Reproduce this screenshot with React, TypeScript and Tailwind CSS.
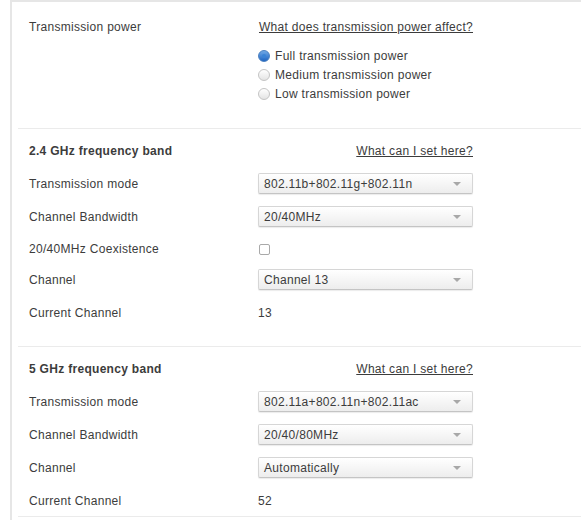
import React from "react"

const font = { fontFamily: '"Liberation Sans", Arial, sans-serif', letterSpacing: "0.3px" }

function Select({ value }: { value: string }) {
  return (
    <div className="relative flex h-[21px] w-[215px] items-center rounded-[2px] border border-[#d6d6d6] border-b-[#c4c4c4] bg-gradient-to-b from-white to-[#ededed] pl-[5px] shadow-[0_1px_1px_rgba(0,0,0,0.08)]">
      <span>{value}</span>
      <span className="absolute right-[11px] top-[8px] h-0 w-0 border-x-[4px] border-t-[4px] border-x-transparent border-t-[#a8a8a8]" />
    </div>
  )
}

function Radio({ checked, label }: { checked?: boolean; label: string }) {
  return (
    <div className="flex h-[19px] items-center">
      {checked ? (
        <span className="flex h-[12px] w-[12px] items-center justify-center rounded-full border border-[#4a7fc0] bg-gradient-to-b from-[#6fa8e6] to-[#1f66c2]">
          <span className="h-[4px] w-[4px] rounded-full bg-[#3a84d6]" />
        </span>
      ) : (
        <span className="h-[12px] w-[12px] rounded-full border border-[#c4c4c4] bg-gradient-to-b from-white to-[#e4e4e4]" />
      )}
      <span className="ml-[5px]">{label}</span>
    </div>
  )
}

function Row({ label, children, h = "h-[21px]" }: { label: string; children: React.ReactNode; h?: string }) {
  return (
    <div className={`flex items-center ${h}`}>
      <div className="w-[229px]">{label}</div>
      <div className="w-[215px]">{children}</div>
    </div>
  )
}

function Band({
  title,
  rows,
  className,
}: {
  title: string
  rows: React.ReactNode
  className: string
}) {
  return (
    <section className={`border-b border-[#ebebeb] pl-[11px] pt-[11px] ${className}`}>
      <div className="flex flex-col gap-[12px]">
        <div className="flex h-[21px] items-center">
          <div className="w-[229px] font-bold">{title}</div>
          <div className="w-[215px] text-right">
            <a className="underline">What can I set here?</a>
          </div>
        </div>
        {rows}
      </div>
    </section>
  )
}

export default function App() {
  return (
    <div className="h-[520px] w-[581px] overflow-hidden bg-white text-[12px] text-[#3c3c3c]" style={font}>
      <div className="ml-[10px] h-full border-l-2 border-t-2 border-[#e6e6e6] pl-[6px]">
        <section className="border-b border-[#ebebeb] pb-[25px] pl-[11px] pt-[14px]">
          <div className="flex">
            <div className="flex h-[21px] w-[229px] items-center">Transmission power</div>
            <div className="w-[215px]">
              <div className="flex h-[21px] items-center justify-end">
                <a className="underline">What does transmission power affect?</a>
              </div>
              <div className="mt-[9px] flex flex-col">
                <Radio checked label="Full transmission power" />
                <Radio label="Medium transmission power" />
                <Radio label="Low transmission power" />
              </div>
            </div>
          </div>
        </section>

        <Band
          title="2.4 GHz frequency band"
          className="pb-[23px]"
          rows={
            <>
              <Row label="Transmission mode">
                <Select value="802.11b+802.11g+802.11n" />
              </Row>
              <Row label="Channel Bandwidth">
                <Select value="20/40MHz" />
              </Row>
              <Row label="20/40MHz Coexistence" h="h-[18px] pt-[2px]">
                <span className="ml-[1px] block h-[11px] w-[11px] rounded-[2px] border border-[#a9a9a9] bg-white" />
              </Row>
              <Row label="Channel">
                <Select value="Channel 13" />
              </Row>
              <Row label="Current Channel">13</Row>
            </>
          }
        />

        <Band
          title="5 GHz frequency band"
          className="pb-[5px]"
          rows={
            <>
              <Row label="Transmission mode">
                <Select value="802.11a+802.11n+802.11ac" />
              </Row>
              <Row label="Channel Bandwidth">
                <Select value="20/40/80MHz" />
              </Row>
              <Row label="Channel">
                <Select value="Automatically" />
              </Row>
              <Row label="Current Channel">52</Row>
            </>
          }
        />
      </div>
    </div>
  )
}
